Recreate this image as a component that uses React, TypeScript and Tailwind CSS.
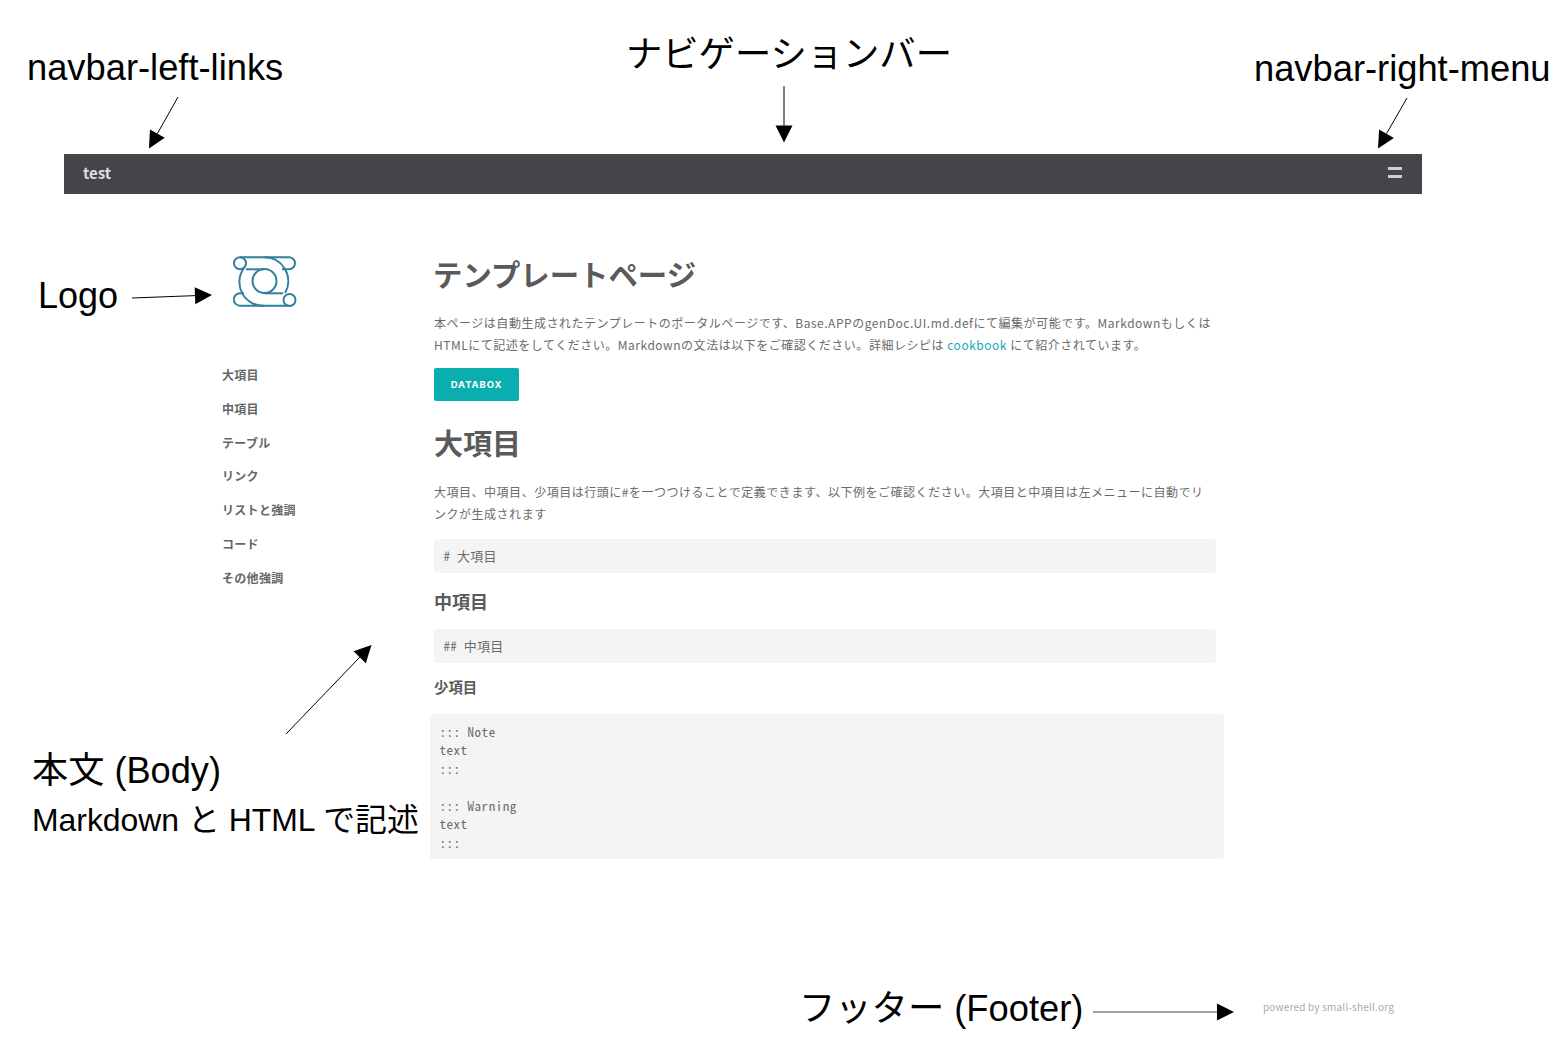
const sidebarItems = ['大項目', '中項目', 'テーブル', 'リンク', 'リストと強調', 'コード', 'その他強調'];

const Logo = () => (
  <svg viewBox="232 256 64 52" className="w-16 h-[52px] ml-[11px]" fill="none" stroke="#327f9f" strokeWidth="2">
    <circle cx="239" cy="263.3" r="6" />
    <circle cx="288.5" cy="300" r="6" />
    <circle cx="263.5" cy="281" r="12" />
    <path d="M239 257.3H288a6 6 0 0 1 0 12H281" />
    <path d="M245 269.3H263.5" />
    <path d="M263.5 257.3A23.7 23.7 0 0 1 284 293" />
    <path d="M243 268A23.7 23.7 0 0 0 263.5 305.7H288" />
    <path d="M263.5 293.3H282" />
    <path d="M243 293.3H239a6.2 6.2 0 0 0 0 12.4H263.5" />
  </svg>
);

const Arrow = ({ x1, y1, x2, y2, color = '#000' }: { x1: number; y1: number; x2: number; y2: number; color?: string }) => {
  const len = Math.hypot(x2 - x1, y2 - y1);
  const ux = (x2 - x1) / len;
  const uy = (y2 - y1) / len;
  const bx = x2 - ux * 17;
  const by = y2 - uy * 17;
  const points = `${x2},${y2} ${bx - uy * 8.5},${by + ux * 8.5} ${bx + uy * 8.5},${by - ux * 8.5}`;
  return (
    <>
      <line x1={x1} y1={y1} x2={bx} y2={by} stroke={color} strokeWidth="1" />
      <polygon points={points} fill="#000" />
    </>
  );
};

const Annotations = () => (
  <>
    <svg className="absolute left-0 top-0 w-[1566px] h-[1045px] pointer-events-none" viewBox="0 0 1566 1045">
      <Arrow x1={178} y1={97} x2={149} y2={148.5} />
      <Arrow x1={784} y1={86} x2={784} y2={142.5} />
      <Arrow x1={1407} y1={98} x2={1378} y2={148.5} />
      <Arrow x1={132} y1={298} x2={212} y2={295} />
      <Arrow x1={286} y1={734} x2={371.5} y2={645} />
      <Arrow x1={1093} y1={1012} x2={1234} y2={1012} color="#444" />
    </svg>
    <div className="absolute left-[27px] top-[47px] text-[36.3px] leading-[42px] text-black whitespace-nowrap">navbar-left-links</div>
    <div className="absolute left-[626px] top-[34px] text-[36.3px] leading-[42px] text-black whitespace-nowrap">ナビゲーションバー</div>
    <div className="absolute left-[1254px] top-[48px] text-[36.3px] leading-[42px] text-black whitespace-nowrap">navbar-right-menu</div>
    <div className="absolute left-[38px] top-[275px] text-[36px] leading-[42px] text-black whitespace-nowrap">Logo</div>
    <div className="absolute left-[32px] top-[750px] text-[36.2px] leading-[42px] text-black whitespace-nowrap">本文 (Body)</div>
    <div className="absolute left-[32px] top-[800px] text-[31.9px] leading-[40px] text-black whitespace-nowrap">Markdown と HTML で記述</div>
    <div className="absolute left-[799px] top-[988px] text-[36.3px] leading-[42px] text-black whitespace-nowrap">フッター (Footer)</div>
  </>
);

export default function App() {
  return (
    <div className="relative w-[1566px] h-[1045px] overflow-hidden bg-white font-['Liberation_Sans','Noto_Sans_CJK_JP',sans-serif]">
      <Annotations />
      <div className="ml-16 pt-[154px] w-[1358px] font-['Noto_Sans_CJK_JP',sans-serif] text-[#6b6b6b]">
        <nav className="h-10 bg-[#454449] flex items-center justify-between pl-[19px] pr-5 pb-[2px]">
          <span className="text-[15px] font-bold text-[#dddddd]">test</span>
          <div className="flex flex-col gap-[5px] mb-[2px]">
            <span className="block w-3.5 h-[3px] bg-[#cfcfcf]" />
            <span className="block w-3.5 h-[3px] bg-[#cfcfcf]" />
          </div>
        </nav>

        <div className="flex">
          <aside className="w-[370px] pl-[158px] pt-[62px]">
            <Logo />
            <ul className="mt-[50px]">
              {sidebarItems.map((item) => (
                <li key={item} className="h-[33.83px] flex items-center text-xs font-bold tracking-[0.3px] text-[#666]">{item}</li>
              ))}
            </ul>
          </aside>

          <main className="w-[782px]">
            <h1 className="mt-[59px] -ml-px text-[29.4px] leading-10 font-bold text-[#5a5a5a]">テンプレートページ</h1>
            <p className="mt-[19px] w-[778px] text-xs leading-[22px] tracking-[0.52px]">
              本ページは自動生成されたテンプレートのポータルページです、Base.APPのgenDoc.UI.md.defにて編集が可能です。Markdownもしくは
              HTMLにて記述をしてください。Markdownの文法は以下をご確認ください。詳細レシピは <a className="text-[#18a9b5]">cookbook</a> にて紹介されています。
            </p>
            <button className="block mt-3 w-[85px] h-[33px] pt-[2px] rounded-[2px] bg-[#0aaeae] text-white text-[9.5px] font-bold tracking-[0.9px] font-['Inter',sans-serif]">DATABOX</button>

            <h2 className="mt-[21px] text-[29px] leading-10 font-bold text-[#5a5a5a]">大項目</h2>
            <p className="mt-[19px] w-[778px] text-xs leading-[22px] tracking-[0.52px]">
              大項目、中項目、少項目は行頭に#を一つつけることで定義できます、以下例をご確認ください。大項目と中項目は左メニューに自動でリンクが生成されます
            </p>
            <pre className="mt-3.5 h-[34px] px-[9.5px] flex items-center rounded-[3px] bg-[#f4f4f4] text-[13px] tracking-[0.25px] font-['Noto_Sans_Mono_CJK_JP','Liberation_Mono',monospace]"># 大項目</pre>

            <h3 className="mt-[15px] text-lg leading-[26px] font-bold text-[#5a5a5a]">中項目</h3>
            <pre className="mt-[15px] h-[34px] px-[9.5px] flex items-center rounded-[3px] bg-[#f4f4f4] text-[13px] tracking-[0.25px] font-['Noto_Sans_Mono_CJK_JP','Liberation_Mono',monospace]">## 中項目</pre>

            <h4 className="mt-3.5 text-[14.4px] leading-5 font-bold text-[#5a5a5a]">少項目</h4>
            <pre className="mt-[17px] -ml-1 w-[794px] h-[145px] pl-[9.5px] pt-[8.5px] rounded-[3px] bg-[#f4f4f4] text-[13px] leading-[18.5px] tracking-[0.52px] font-['Noto_Sans_Mono_CJK_JP','Liberation_Mono',monospace]">{`::: Note
text
:::

::: Warning
text
:::`}</pre>
          </main>
        </div>

        <footer className="mt-[141px] pr-7 text-right text-[10px] leading-[14px] tracking-[0.2px] text-[#aaaaaa]">powered by small-shell.org</footer>
      </div>
    </div>
  );
}
